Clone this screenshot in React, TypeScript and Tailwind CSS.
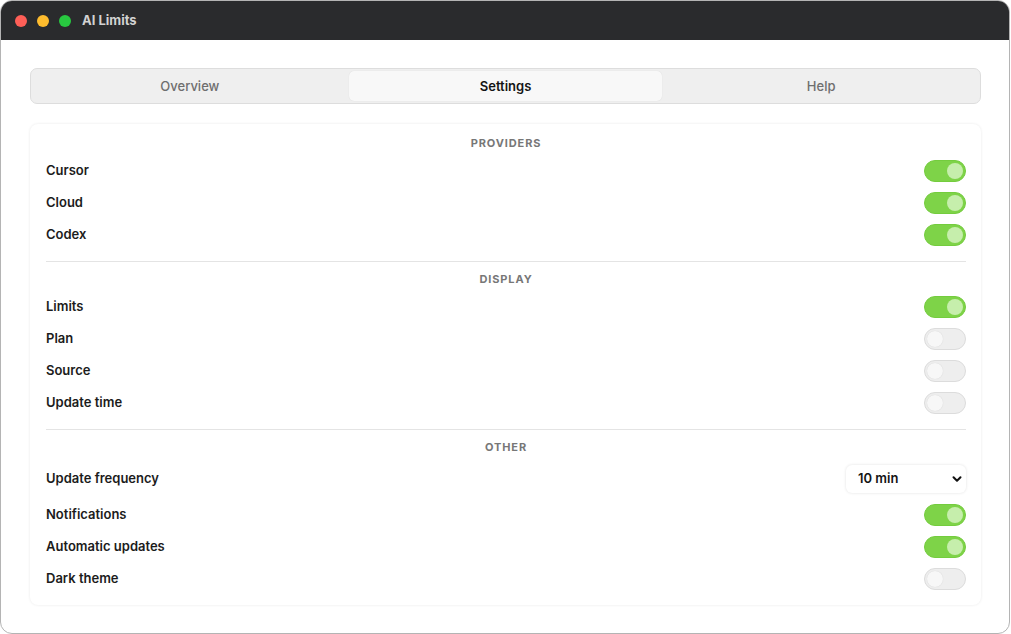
import React, { useState } from "react";

type ToggleProps = { on: boolean; onChange: () => void };

function Toggle({ on, onChange }: ToggleProps) {
  return (
    <button
      type="button"
      onClick={onChange}
      className={
        on
          ? "relative h-[22px] w-[42px] rounded-full bg-[#7ed348] border border-[#74cc3e]"
          : "relative h-[22px] w-[42px] rounded-full bg-[#eeeeee] border border-[#dcdcdc]"
      }
    >
      <span
        className={
          on
            ? "absolute top-[2px] right-[2px] h-[16px] w-[16px] rounded-full bg-[#c6eeac]"
            : "absolute top-[2px] left-[2px] h-[16px] w-[16px] rounded-full bg-[#f7f7f7] shadow-[0_0_1px_rgba(0,0,0,0.15)]"
        }
      />
    </button>
  );
}

function SectionTitle({ children }: { children: React.ReactNode }) {
  return (
    <div className="mt-[10px] mb-[5px] h-[14px] text-center text-[11px] leading-[14px] font-bold tracking-[0.08em] text-[#777777]">
      {children}
    </div>
  );
}

function Row({ label, children, tall }: { label: string; children: React.ReactNode; tall?: boolean }) {
  return (
    <div className={(tall ? "h-[40px]" : "h-[32px]") + " flex items-center justify-between"}>
      <span className="text-[13px] font-semibold text-[#1c1c1c]">{label}</span>
      {children}
    </div>
  );
}

function Divider() {
  return <div className="mt-[10px] h-px bg-[#e4e4e4]" />;
}

export default function App() {
  const [state, setState] = useState<Record<string, boolean>>({
    cursor: true,
    cloud: true,
    codex: true,
    limits: true,
    plan: false,
    source: false,
    updateTime: false,
    notifications: true,
    autoUpdates: true,
    dark: false,
  });
  const [tab, setTab] = useState("Settings");
  const flip = (k: string) => setState((s) => ({ ...s, [k]: !s[k] }));

  const tabs = ["Overview", "Settings", "Help"];

  return (
    <div
      className="w-[1011px] h-[634px] bg-white"
      style={{ fontFamily: "Inter, 'Noto Sans', sans-serif" }}
    >
      <div className="flex h-[634px] w-[1010px] flex-col overflow-hidden rounded-[12px] border border-[#b4b4b4] bg-white">
        {/* title bar */}
        <div className="flex h-[39px] shrink-0 items-center bg-[#2a2b2d] pl-[14px]">
          <div className="flex items-center gap-[10px]">
            <span className="h-[12px] w-[12px] rounded-full bg-[#fe5f57]" />
            <span className="h-[12px] w-[12px] rounded-full bg-[#febc2e]" />
            <span className="h-[12px] w-[12px] rounded-full bg-[#28c840]" />
          </div>
          <span className="ml-[11px] text-[13px] font-bold text-[#d2d2d2]">AI Limits</span>
        </div>

        {/* body */}
        <div className="flex flex-1 flex-col pl-[29px] pr-[28px] pt-[28px]">
          <div className="flex h-[36px] gap-[2px] rounded-[7px] border border-[#dddddd] bg-[#efefef] p-[2px]">
            {tabs.map((t) => (
              <button
                key={t}
                type="button"
                onClick={() => setTab(t)}
                className={
                  t === tab
                    ? "flex-1 rounded-[5px] bg-[#f8f8f8] pt-[2px] text-[13px] font-semibold text-[#141414] shadow-[0_0_1px_rgba(0,0,0,0.12)]"
                    : "flex-1 rounded-[5px] pt-[2px] text-[13px] font-medium text-[#6e6e6e]"
                }
              >
                {t}
              </button>
            ))}
          </div>

          <div className="mt-[20px] rounded-[8px] bg-white pl-[16px] pr-[15px] pt-[2px] pb-[10px] shadow-[0_0_3px_rgba(0,0,0,0.09)]">
            <SectionTitle>PROVIDERS</SectionTitle>
            <Row label="Cursor">
              <Toggle on={state.cursor} onChange={() => flip("cursor")} />
            </Row>
            <Row label="Cloud">
              <Toggle on={state.cloud} onChange={() => flip("cloud")} />
            </Row>
            <Row label="Codex">
              <Toggle on={state.codex} onChange={() => flip("codex")} />
            </Row>
            <Divider />

            <SectionTitle>DISPLAY</SectionTitle>
            <Row label="Limits">
              <Toggle on={state.limits} onChange={() => flip("limits")} />
            </Row>
            <Row label="Plan">
              <Toggle on={state.plan} onChange={() => flip("plan")} />
            </Row>
            <Row label="Source">
              <Toggle on={state.source} onChange={() => flip("source")} />
            </Row>
            <Row label="Update time">
              <Toggle on={state.updateTime} onChange={() => flip("updateTime")} />
            </Row>
            <Divider />

            <SectionTitle>OTHER</SectionTitle>
            <Row label="Update frequency" tall>
              <div className="flex h-[28px] w-[120px] items-center justify-between rounded-[6px] bg-white pl-[12px] pr-[4px] shadow-[0_0_3px_rgba(0,0,0,0.12)]">
                <span className="text-[13px] font-semibold text-[#141414]">10 min</span>
                <svg width="10" height="10" viewBox="0 0 10 10" fill="none">
                  <path d="M1.5 3.2 L5 6.7 L8.5 3.2" stroke="#111111" strokeWidth="2" strokeLinecap="round" strokeLinejoin="round" />
                </svg>
              </div>
            </Row>
            <Row label="Notifications">
              <Toggle on={state.notifications} onChange={() => flip("notifications")} />
            </Row>
            <Row label="Automatic updates">
              <Toggle on={state.autoUpdates} onChange={() => flip("autoUpdates")} />
            </Row>
            <Row label="Dark theme">
              <Toggle on={state.dark} onChange={() => flip("dark")} />
            </Row>
          </div>
        </div>
      </div>
    </div>
  );
}
